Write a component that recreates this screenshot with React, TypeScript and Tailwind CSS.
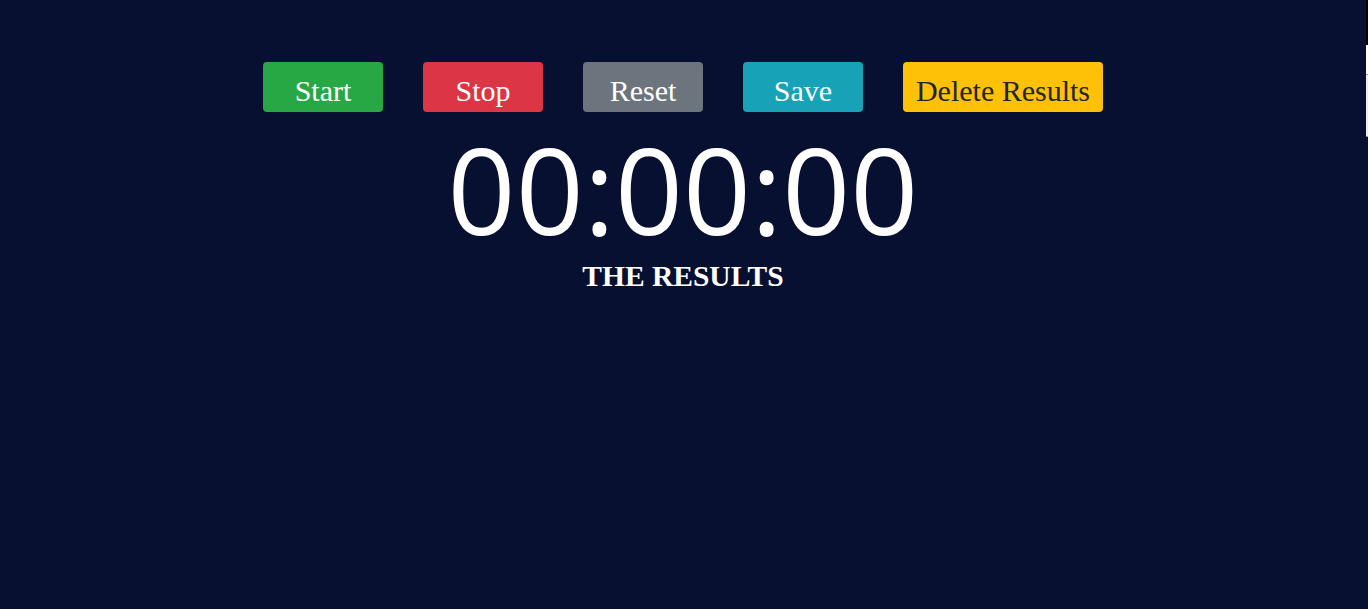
import React from "react";

const btn =
  "h-[50px] rounded-[4px] flex items-start justify-center pt-[12px] text-[30px] leading-[normal]";

export default function App() {
  return (
    <div className="flex w-[1368px] h-[609px] bg-[#071030] overflow-hidden">
      <div className="w-[1366px] flex flex-col items-center font-[family-name:Liberation_Serif,serif]">
        <div className="flex gap-[40px] mt-[62px]">
          <div className={`${btn} w-[120px] bg-[#28a745] text-white`}>Start</div>
          <div className={`${btn} w-[120px] bg-[#dc3545] text-white`}>Stop</div>
          <div className={`${btn} w-[120px] bg-[#6c757d] text-white`}>Reset</div>
          <div className={`${btn} w-[120px] bg-[#17a2b8] text-white`}>Save</div>
          <div className={`${btn} w-[200px] bg-[#ffc107] text-[#212529]`}>Delete Results</div>
        </div>
        <div className="text-white text-[119px] leading-[130px] mt-[12px] font-[family-name:Open_Sans,sans-serif]">
          00:00:00
        </div>
        <div className="text-white font-bold text-[29.5px] leading-[normal] mt-[6px]">THE RESULTS</div>
      </div>
      <div className="w-[2px] flex flex-col">
        <div className="h-[45px] bg-black" />
        <div className="h-[29px] bg-white" />
        <div className="h-[63px] bg-[#efefef] border-t border-b border-[#9a9a9a]" />
      </div>
    </div>
  );
}
